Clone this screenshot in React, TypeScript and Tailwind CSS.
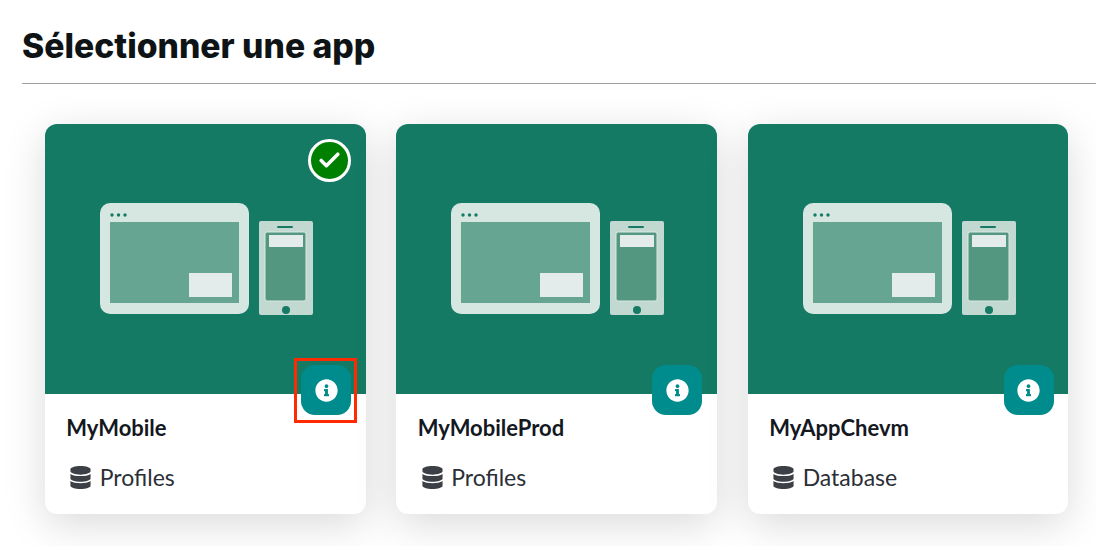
import { Check } from 'lucide-react';
import { FaDatabase, FaInfoCircle } from 'react-icons/fa';

const apps = [
  { name: 'MyMobile', source: 'Profiles', selected: true },
  { name: 'MyMobileProd', source: 'Profiles', selected: false },
  { name: 'MyAppChevm', source: 'Database', selected: false },
];

function Devices() {
  return (
    <svg width="213" height="112" viewBox="0 0 213 112" className="block">
      {/* tablet */}
      <rect x="0" y="0" width="149" height="111" rx="10" fill="#d6e6e1" />
      <rect x="10" y="19" width="129" height="81" fill="#67a593" />
      <rect x="89" y="70" width="43" height="24" fill="#e3ecea" />
      <circle cx="12" cy="12" r="1.7" fill="#167a64" />
      <circle cx="18.5" cy="12" r="1.7" fill="#167a64" />
      <circle cx="25" cy="12" r="1.7" fill="#167a64" />
      {/* phone */}
      <rect x="159" y="18" width="54" height="94" rx="2" fill="#c2d9d1" />
      <rect x="165" y="29" width="41" height="69" rx="2" fill="#539780" stroke="#dbe8e4" strokeWidth="1" />
      <rect x="169" y="32" width="34" height="12" fill="#e3ecea" />
      <rect x="177" y="23" width="16" height="2" rx="1" fill="#167a64" />
      <circle cx="186" cy="107" r="4" fill="#167a64" />
    </svg>
  );
}

function AppCard({ name, source, selected }: { name: string; source: string; selected: boolean }) {
  return (
    <div className="relative w-[320.8px] overflow-hidden rounded-xl bg-white shadow-[0_10px_42px_rgba(0,0,0,0.15)]">
      <div className="flex h-[270px] items-start justify-center bg-[#157a64] pt-[79px] pl-[2px]">
        <Devices />
      </div>
      {selected && (
        <div className="absolute top-[15px] left-[263.3px] flex size-[43px] items-center justify-center rounded-full border-[3px] border-white bg-[#008000]">
          <Check className="size-[25px] text-white" strokeWidth={3.4} />
        </div>
      )}
      <div className="absolute top-[241px] left-[256.3px] flex size-[50px] items-center justify-center rounded-[14px] bg-[#008c8c] text-white">
        <FaInfoCircle size={23} />
      </div>
      <div className="h-[120px] px-[21.5px] pt-[20px] font-['Lato',sans-serif]">
        <p className="text-[22px] leading-[28px] font-bold text-[#14181f]">{name}</p>
        <p className="mt-[21px] flex items-center gap-[4.5px] text-[23px] leading-[28px] text-[#2b2f36]">
          <FaDatabase size={23} className="mx-[3px] text-[#3c4046]" />
          {source}
        </p>
      </div>
    </div>
  );
}

export default function App() {
  return (
    <div className="h-[546px] w-[1096px] overflow-hidden bg-white pl-[22px]">
      <div className="h-[84px] border-b border-[#a0a0a0] pt-[24px]">
        <h1 className="font-['Inter',sans-serif] text-[33.7px] leading-[44px] font-extrabold text-[#0e1416]">
          Sélectionner une app
        </h1>
      </div>
      <div className="relative flex gap-[30.65px] pt-[40px] pl-[22.75px]">
        {apps.map((app) => (
          <AppCard key={app.name} {...app} />
        ))}
        {/* annotation frame */}
        <div className="absolute top-[274px] left-[272px] h-[65px] w-[63px] border-[3px] border-[#ff2a00]" />
      </div>
    </div>
  );
}
